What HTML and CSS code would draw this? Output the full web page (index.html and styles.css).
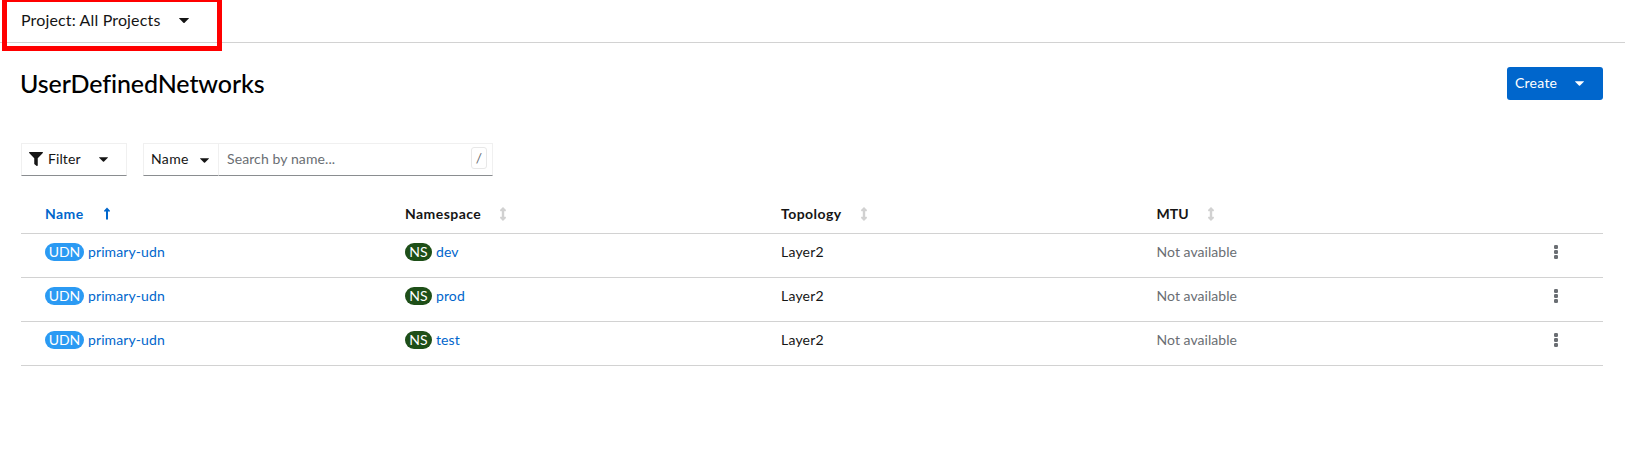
FILE: index.html
```html
<!DOCTYPE html>
<html lang="en">
<head>
<meta charset="utf-8">
<title>UserDefinedNetworks</title>
<link rel="stylesheet" href="styles.css">
</head>
<body>
<svg class="defs" aria-hidden="true">
  <symbol id="caret" viewBox="0 0 10 5"><path d="M.5 0h9q.8 0 .3.6L5.600 4.700q-.6.5-1.200 0L.2.600Q-.3 0 .5 0z"/></symbol>
  <symbol id="sort" viewBox="0 0 6 14"><path d="M3 .2 5.800 3V4H4v6h1.800v1L3 13.800.2 11v-1H2V4H.2V3z" stroke="currentColor" stroke-width=".4" stroke-linejoin="round"/></symbol>
  <symbol id="kebab" viewBox="0 0 4 14"><rect width="4" height="4" rx="1.300"/><rect y="5" width="4" height="4" rx="1.300"/><rect y="10" width="4" height="4" rx="1.300"/></symbol>
</svg>
<header class="project-bar">
  <button class="project">Project: All Projects<svg class="caret"><use href="#caret"/></svg></button>
  <div class="highlight"></div>
</header>
<main>
  <div class="heading">
    <h1>UserDefinedNetworks</h1>
    <button class="create">Create<svg class="caret"><use href="#caret"/></svg></button>
  </div>
  <div class="toolbar">
    <button class="control filter"><svg class="funnel" viewBox="0 0 512 512"><path d="M488 0H24C2.700 0-8 25.900 7.100 41L192 226v206c0 7.800 3.800 15.200 10.200 19.700l80 56C298 518.700 320 507.500 320 488V226L505 41C520 25.900 509.300 0 488 0z"/></svg>Filter<svg class="caret"><use href="#caret"/></svg></button>
    <div class="search-group">
      <button class="control attribute">Name<svg class="caret"><use href="#caret"/></svg></button>
      <div class="control search"><span>Search by name...</span><kbd>/</kbd></div>
    </div>
  </div>
  <div class="table">
    <div class="row head">
      <div class="sorted">Name<svg class="sort-up" viewBox="0 0 6 12"><path d="M3 0 6 3.200V4H4v8H2V4H0v-.8z"/></svg></div>
      <div>Namespace<svg class="sort"><use href="#sort"/></svg></div>
      <div>Topology<svg class="sort"><use href="#sort"/></svg></div>
      <div class="mtu">MTU<svg class="sort"><use href="#sort"/></svg></div>
      <div></div>
    </div>
    <div class="row">
      <div><span class="badge udn">UDN</span><a>primary-udn</a></div>
      <div><span class="badge ns">NS</span><a>dev</a></div>
      <div class="topology">Layer2</div><div class="muted">Not available</div>
      <div><svg class="kebab"><use href="#kebab"/></svg></div>
    </div>
    <div class="row">
      <div><span class="badge udn">UDN</span><a>primary-udn</a></div>
      <div><span class="badge ns">NS</span><a>prod</a></div>
      <div class="topology">Layer2</div><div class="muted">Not available</div>
      <div><svg class="kebab"><use href="#kebab"/></svg></div>
    </div>
    <div class="row">
      <div><span class="badge udn">UDN</span><a>primary-udn</a></div>
      <div><span class="badge ns">NS</span><a>test</a></div>
      <div class="topology">Layer2</div><div class="muted">Not available</div>
      <div><svg class="kebab"><use href="#kebab"/></svg></div>
    </div>
  </div>
</main>
</body>
</html>
```
FILE: styles.css
```css
* { box-sizing: border-box; }
body {
  margin: 0;
  background: #fff;
  color: #151515;
  font: 14px/21px Lato, "Open Sans", sans-serif;
  letter-spacing: .1px;
}
svg { display: block; flex: none; fill: currentColor; }
.defs { display: none; }
button {
  display: flex;
  align-items: center;
  margin: 0;
  padding: 0;
  border: 0;
  background: none;
  color: inherit;
  font: inherit;
  letter-spacing: inherit;
}
.caret { width: 9px; height: 5px; }

.project-bar {
  position: relative;
  height: 43px;
  padding: 8px 21px 0;
  border-bottom: 1px solid #d2d2d2;
}
.project { font-size: 16px; line-height: 24px; letter-spacing: .15px; }
.project .caret { width: 10px; margin: 1px 0 0 19px; }
.highlight {
  position: absolute;
  top: -3px;
  left: 2px;
  width: 220px;
  height: 54px;
  border: 5px solid #f00;
}

main { padding: 24px 22px 0 21px; }
.heading { display: flex; justify-content: space-between; height: 76px; }
h1 {
  margin: -2px 0 0 -1px;
  font-size: 25px;
  font-weight: 500;
  line-height: 36px;
  letter-spacing: -.1px;
  color: #000;
}
.create {
  width: 96px;
  height: 33px;
  padding: 0 0 2px 8px;
  border-radius: 3px;
  background: #06c;
  color: #fff;
  letter-spacing: .25px;
}
.create .caret { margin: 2px 0 0 18px; }

.toolbar { display: flex; gap: 16px; }
.control {
  display: flex;
  align-items: center;
  height: 33px;
  padding-bottom: 2px;
  border: 1px solid #f0f0f0;
  border-bottom-color: #8a8d90;
}
.filter { width: 106px; padding-left: 7px; }
.funnel { width: 14px; height: 14px; margin: 1px 5px 0 0; }
.filter .caret { margin: 2px 0 0 18px; }
.search-group { display: flex; }
.attribute { width: 76px; padding-left: 7px; letter-spacing: .35px; }
.attribute .caret { margin: 4px 0 0 11px; }
.search {
  justify-content: space-between;
  width: 274px;
  padding-left: 8px;
  padding-right: 5px;
  border-left: 0;
  color: #6a6e73;
}
kbd {
  width: 16px;
  height: 22px;
  margin-bottom: 1px;
  border: 1px solid #e8e8e8;
  border-radius: 3px;
  font: inherit;
  line-height: 20px;
  text-align: center;
}

.table { margin-top: 14px; }
.row {
  display: grid;
  grid-template-columns: 360px 376px 375.5px 397.5px 1fr;
  height: 44px;
  padding: 7px 0 0 24px;
  border-bottom: 1px solid #d2d2d2;
}
.row > div { display: flex; align-items: flex-start; }
.head { padding-top: 13px; font-weight: 700; letter-spacing: .45px; }
.sorted { color: #06c; }
.mtu { letter-spacing: 0; }
.sort { width: 6px; height: 14px; margin: 4px 0 0 19px; color: #d2d2d2; }
.sort-up { width: 6px; height: 13px; margin: 4px 0 0 20px; }
.badge {
  height: 18px;
  margin: 2px 4px 0 0;
  border-radius: 9px;
  color: #fff;
  line-height: 18px;
  letter-spacing: 0;
  text-align: center;
}
.udn { width: 39px; background: #2b9af3; }
.ns { width: 27px; background: #1e4f18; }
a { color: #06c; }
.topology { letter-spacing: .2px; }
.muted { color: #6a6e73; letter-spacing: .05px; }
.kebab { width: 4px; height: 14px; margin-top: 4px; color: #6a6e73; }
```
